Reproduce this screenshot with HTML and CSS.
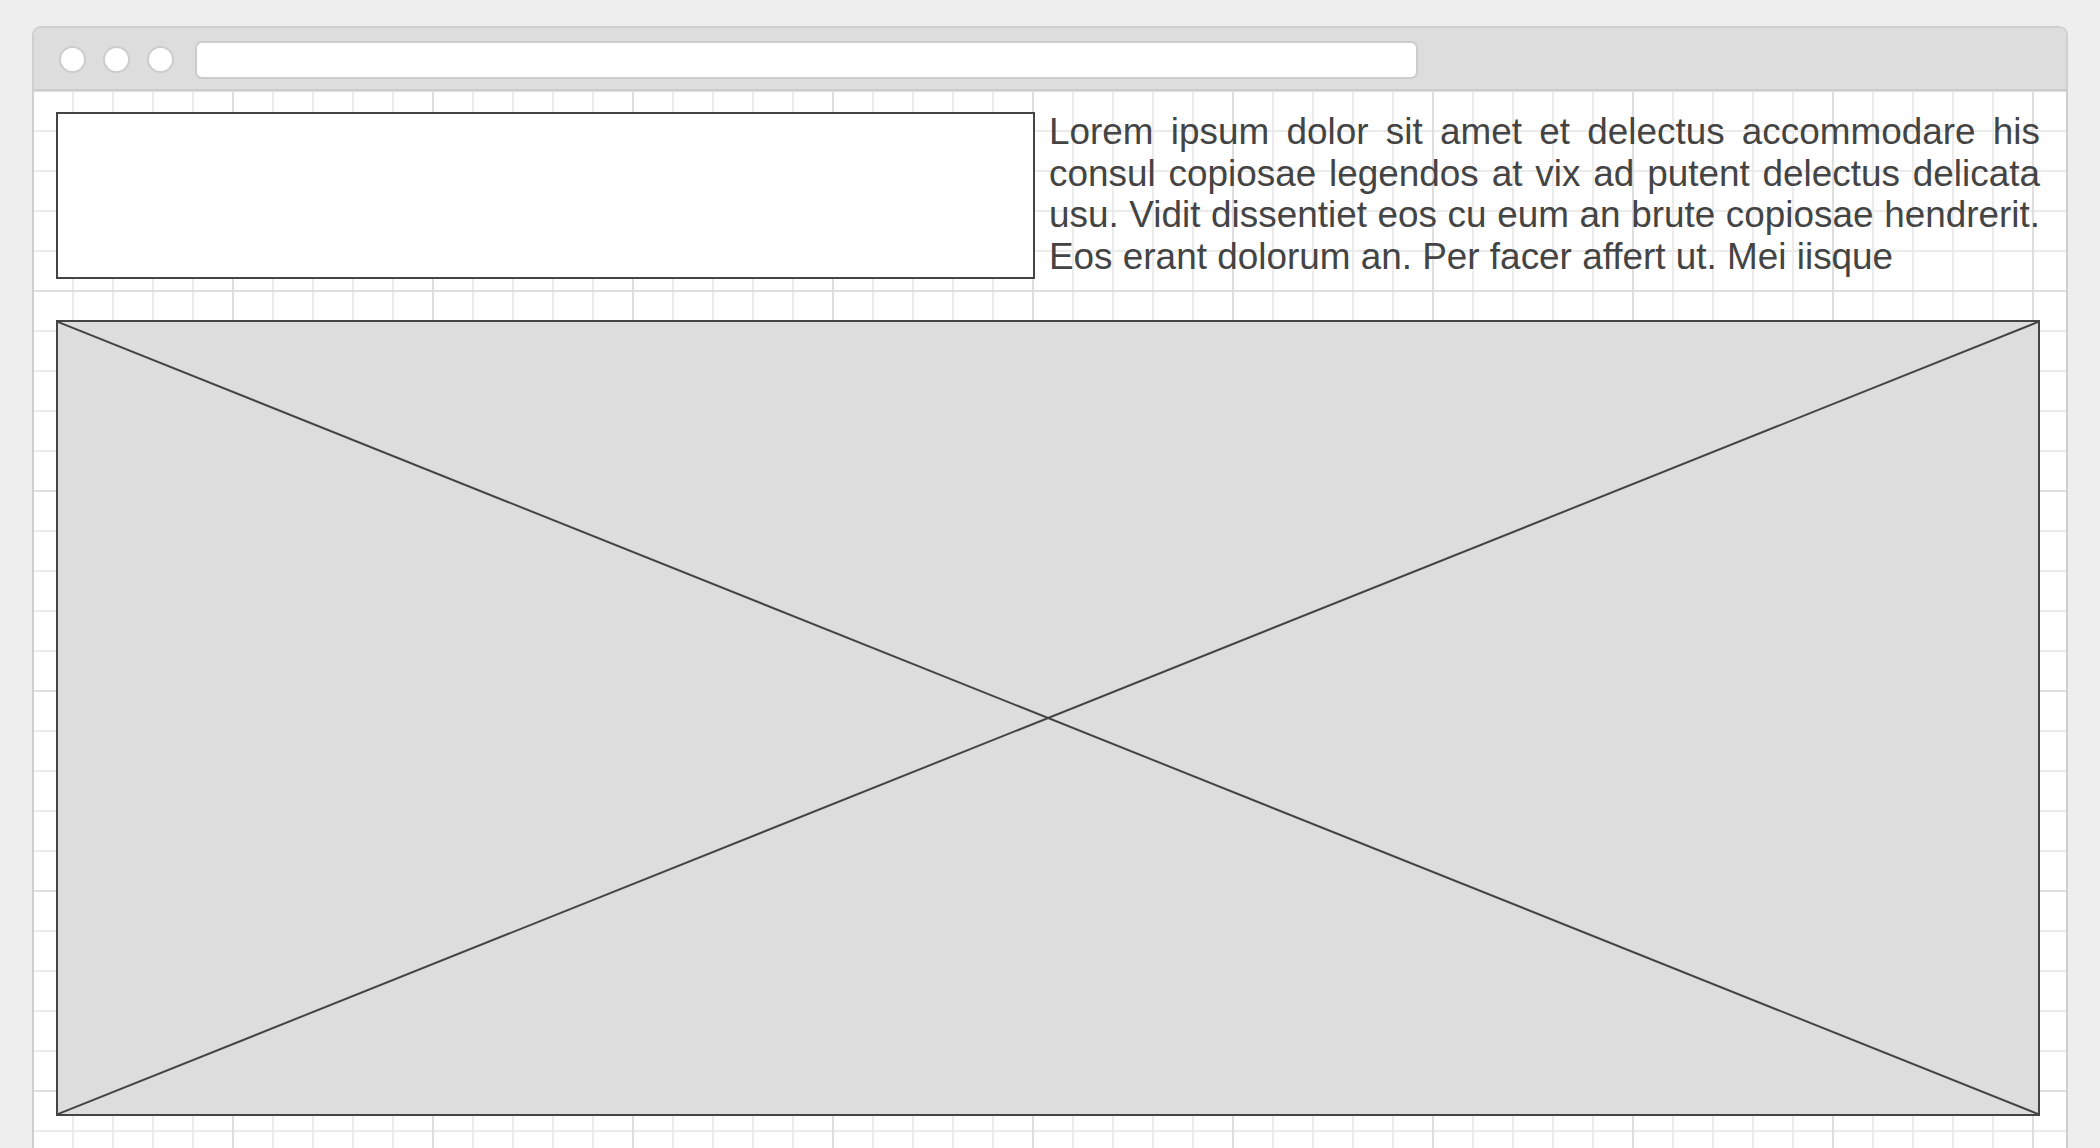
FILE: index.html
```html
<!DOCTYPE html>
<html lang="en">
<head>
<meta charset="utf-8">
<title>Wireframe</title>
<link rel="stylesheet" href="styles.css">
</head>
<body>
  <div class="window">
    <div class="window-bar">
      <span class="dot"></span>
      <span class="dot"></span>
      <span class="dot"></span>
      <div class="address"></div>
    </div>
    <div class="content">
      <div class="top-row">
        <div class="box"></div>
        <p class="copy">Lorem ipsum dolor sit amet et delectus accommodare his consul copiosae legendos at vix ad putent delectus delicata usu. Vidit dissentiet eos cu eum an brute copiosae hendrerit. Eos erant dolorum an. Per facer affert ut. Mei iisque</p>
      </div>
      <div class="placeholder">
        <svg class="cross" viewBox="0 0 100 100" preserveAspectRatio="none" aria-hidden="true">
          <line x1="0" y1="0" x2="100" y2="100"></line>
          <line x1="100" y1="0" x2="0" y2="100"></line>
        </svg>
      </div>
    </div>
  </div>
</body>
</html>
```

FILE: styles.css
```css
html, body {
  margin: 0;
  height: 100%;
  overflow: hidden;
}

body {
  background: #eeeeee;
  padding: 26px 32px 0;
  box-sizing: border-box;
  font-family: "Liberation Sans", Arial, sans-serif;
}

.window {
  height: 1160px;
  border: 2px solid #cfcfcf;
  border-bottom: none;
  border-radius: 9px 9px 0 0;
  background: #ffffff;
  display: flex;
  flex-direction: column;
  overflow: hidden;
}

.window-bar {
  height: 63px;
  flex: none;
  box-sizing: border-box;
  background: #dddddd;
  border-bottom: 2px solid #cccccc;
  display: flex;
  align-items: flex-start;
  padding: 13px 0 0 25px;
}

.dot {
  width: 27px;
  height: 27px;
  box-sizing: border-box;
  margin-top: 5px;
  margin-right: 17px;
  border-radius: 50%;
  background: #ffffff;
  border: 2px solid #cccccc;
  flex: none;
}

.dot:nth-child(3) {
  margin-right: 21px;
}

.address {
  width: 1223px;
  height: 38px;
  box-sizing: border-box;
  background: #ffffff;
  border: 2px solid #cccccc;
  border-radius: 7px;
  flex: none;
}

.content {
  flex: 1;
  padding: 21px 26px 0 22px;
  background-color: #ffffff;
  background-image:
    linear-gradient(to right, #dedede 0, #dedede 2px, transparent 2px),
    linear-gradient(to bottom, #dedede 0, #dedede 2px, transparent 2px),
    linear-gradient(to right, #ebebeb 0, #ebebeb 2px, transparent 2px),
    linear-gradient(to bottom, #ebebeb 0, #ebebeb 2px, transparent 2px);
  background-size: 200px 200px, 200px 200px, 40px 40px, 40px 40px;
  background-position: -2px -1px, -2px -1px, -2px -1px, -2px -1px;
}

.top-row {
  display: flex;
  align-items: flex-start;
  gap: 14px;
}

.box {
  width: 979px;
  height: 167px;
  flex: none;
  box-sizing: border-box;
  border: 2px solid #444444;
  background: #ffffff;
}

.copy {
  flex: 1;
  margin: -1px 0 0 0;
  font-size: 36.9px;
  line-height: 41.6px;
  color: #444444;
  text-align: justify;
}

.placeholder {
  margin-top: 41px;
  height: 796px;
  box-sizing: border-box;
  border: 2px solid #444444;
  background: #dddddd;
}

.cross {
  display: block;
  width: 100%;
  height: 100%;
}

.cross line {
  stroke: #444444;
  stroke-width: 2;
  vector-effect: non-scaling-stroke;
}
```
